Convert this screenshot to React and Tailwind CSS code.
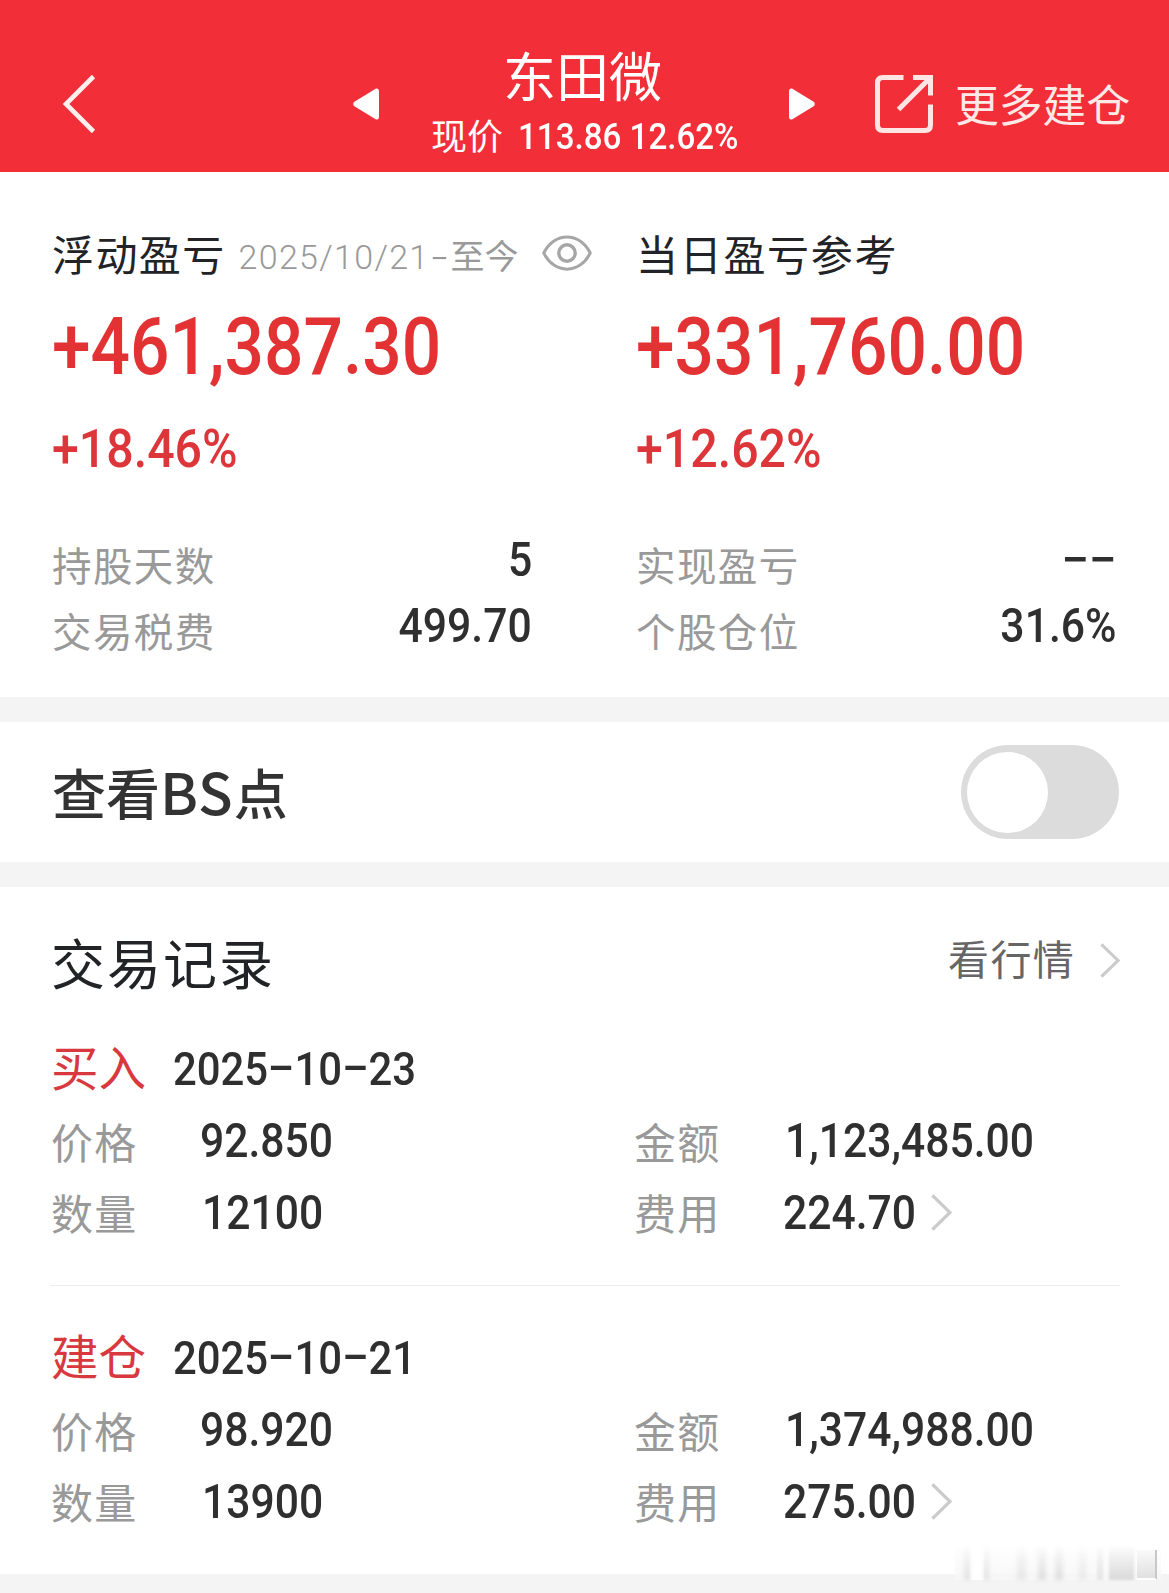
const CJK = 'font-["Noto_Sans_CJK_SC",sans-serif]';
const DIGITS = 'font-["Roboto",sans-serif] font-medium whitespace-nowrap inline-block';

function Chevron({ className }) {
  return (
    <svg viewBox="0 0 21 37" className={className} fill="none" stroke="#cbcbcb" strokeWidth="3.3">
      <path d="M1.4 1.4 L19 18.5 L1.4 35.6" />
    </svg>
  );
}

function Hyphen({ className, scale = "-translate-y-[3px] scale-x-[1.5]" }) {
  return (
    <span className={`inline-block text-center font-["Inter",sans-serif] ${className}`}>
      <span className={`inline-block ${scale}`}>-</span>
    </span>
  );
}

function DateText({ value }) {
  const parts = value.split("-");
  return (
    <span className={`${DIGITS} origin-left scale-x-[0.91] text-[46px] leading-none text-[#2f2f2f]`}>
      {parts[0]}
      <Hyphen className="w-[29px]" />
      {parts[1]}
      <Hyphen className="w-[29px]" />
      {parts[2]}
    </span>
  );
}

function Header() {
  return (
    <header className="grid h-[172px] grid-cols-[353px_462px_1fr] bg-[#f22f38] pt-[37px] text-white">
      <div className="flex items-center pb-px pl-[62px]">
        <svg viewBox="0 0 34 60" className="h-[60px] w-[34px]" fill="none" stroke="#fff0ee" strokeWidth="4.6">
          <path d="M31.5 2.5 L4 30 L31.5 57.5" />
        </svg>
      </div>
      <div className="flex items-center justify-between pb-px">
        <svg viewBox="0 0 26 32" className="h-8 w-[26px]" fill="#fff">
          <path d="M23 0.5 Q26 0 26 3 V29 Q26 32 23 31.5 L1 18 Q-0.5 16 1 14 Z" />
        </svg>
        <div className="mt-[6px] flex flex-col items-center gap-[5px] self-start">
          <div className="h-[63px] pr-[3px] text-[53px] leading-[63px]">东田微</div>
          <div className="flex h-[46px] w-[306px] items-center text-[36px] leading-[46px]">
            <span className="shrink-0 whitespace-nowrap">现价</span>
            <span className={`${DIGITS} ml-[15px] origin-left scale-x-[0.92] pt-[5px] leading-none`}>113.86 12.62%</span>
          </div>
        </div>
        <svg viewBox="0 0 26 32" className="h-8 w-[26px]" fill="#fff">
          <path d="M3 0.5 Q0 0 0 3 V29 Q0 32 3 31.5 L25 18 Q26.5 16 25 14 Z" />
        </svg>
      </div>
      <div className="flex items-center pb-px pl-[60px]">
        <svg viewBox="0 0 58 58" className="size-[58px] shrink-0" fill="none" stroke="#ffe6e4" strokeWidth="5">
          <path d="M28.5 2.5 H8 Q2.5 2.5 2.5 8 V50 Q2.5 55.5 8 55.5 H50 Q55.5 55.5 55.5 50 V29.5" />
          <path d="M38 2.5 H55.5 V20.5 M55 3 L23.5 34.5" />
        </svg>
        <span className="ml-[22px] text-[43.8px] leading-none whitespace-nowrap text-[#ffe9e7]">更多建仓</span>
      </div>
    </header>
  );
}

function Stat({ label, children }) {
  return (
    <div className="flex h-[66px] items-center justify-between">
      <span className="mt-[3px] text-[39.5px] leading-none tracking-[1.4px] text-[#999]">{label}</span>
      <span className={`${DIGITS} mb-[4px] origin-right scale-x-[0.89] text-[48px] leading-none text-[#2f2f2f]`}>{children}</span>
    </div>
  );
}

function Performance({ amount, percent }) {
  return (
    <>
      <div className="mt-[15px] h-[96px]">
        <span className={`${DIGITS} origin-left scale-x-[0.868] text-[80px] leading-[96px] text-[#e33234]`}>{amount}</span>
      </div>
      <div className="mt-[21px] h-[66px]">
        <span className={`${DIGITS} origin-left scale-x-[0.888] text-[54.4px] leading-[66px] text-[#dc363a]`}>{percent}</span>
      </div>
    </>
  );
}

function Summary() {
  return (
    <section className="grid h-[525px] grid-cols-[584px_1fr] content-start gap-y-[47px] px-[52px] pt-[50px]">
      <div className="w-[560px]">
        <div className="flex h-[62px] items-center">
          <span className="text-[42px] leading-none tracking-[1.4px] text-[#222327]">浮动盈亏</span>
          <span className="ml-[13px] flex items-baseline pt-[6px] text-[34px] leading-none whitespace-nowrap text-[#999]">
            <span className='font-["Roboto",sans-serif] font-light tracking-[1.3px]'>
              2025/10/21
              <Hyphen className="w-[21px] font-light" scale="scale-x-[1.3]" />
            </span>
            至今
          </span>
          <svg viewBox="0 0 50 36" className="ml-[23px] h-9 w-[50px] shrink-0" fill="none" stroke="#a6a6a6" strokeWidth="3">
            <path d="M1.8 18 C12 -3.5 38 -3.5 48.2 18 C38 39.5 12 39.5 1.8 18 Z" />
            <circle cx="25" cy="18" r="8.2" strokeWidth="3.4" />
          </svg>
        </div>
        <Performance amount="+461,387.30" percent="+18.46%" />
      </div>
      <div>
        <div className="flex h-[62px] items-center">
          <span className="text-[42px] leading-none tracking-[1.7px] text-[#222327]">当日盈亏参考</span>
        </div>
        <Performance amount="+331,760.00" percent="+12.62%" />
      </div>
      <div className="w-[480px]">
        <Stat label="持股天数">5</Stat>
        <Stat label="交易税费">499.70</Stat>
      </div>
      <div className="w-[481px]">
        <Stat label="实现盈亏">
          <Hyphen className="w-[31px]" />
          <Hyphen className="w-[31px]" />
        </Stat>
        <Stat label="个股仓位">31.6%</Stat>
      </div>
    </section>
  );
}

function Field({ label, value, valueClass, chevron }) {
  return (
    <div className="flex h-[71.6px] items-center">
      <span className="mb-[4px] w-[86px] shrink-0 text-[42px] leading-none tracking-[1.2px] whitespace-nowrap text-[#999]">{label}</span>
      <span className={`${DIGITS} mb-[3px] origin-left scale-x-[0.888] text-[48px] leading-none text-[#2f2f2f] ${valueClass}`}>{value}</span>
      {chevron && <Chevron className="mb-[4px] -ml-[2px] h-[37px] w-[21px] shrink-0" />}
    </div>
  );
}

function Trade({ kind, date, price, amount, quantity, fee }) {
  return (
    <article className="h-[289px]">
      <div className="flex h-[76px] items-center">
        <span className="mb-[6px] text-[47.5px] leading-none text-[#d9383e]">{kind}</span>
        <span className="mb-px ml-[27px]">
          <DateText value={date} />
        </span>
      </div>
      <div className="grid grid-cols-[583px_1fr]">
        <Field label="价格" value={price} valueClass="ml-[63px]" />
        <Field label="金额" value={amount} valueClass="ml-[65px]" />
        <Field label="数量" value={quantity} valueClass="ml-[65px]" />
        <Field label="费用" value={fee} valueClass="ml-[63px]" chevron />
      </div>
    </article>
  );
}

function Ghost() {
  return (
    <div className="absolute right-[8px] bottom-[13px] flex h-[35px] w-[206px] items-stretch bg-linear-to-b from-white/0 to-[#f7f7f7]">
      <i className="ml-[9px] w-[6px] bg-linear-to-b from-white/0 to-[#e0e0e0] blur-[2px]" />
      <i className="w-[14px] bg-white" />
      <i className="w-[5px] bg-linear-to-b from-white/0 to-[#e0e0e0] blur-[2px]" />
      <i className="ml-[28px] w-[9px] bg-linear-to-b from-white/0 to-[#e6e6e6] blur-[2px]" />
      <i className="ml-[12px] w-[8px] bg-linear-to-b from-white/0 to-[#dedede] blur-[2px]" />
      <i className="ml-[9px] w-[8px] bg-linear-to-b from-white/0 to-[#dedede] blur-[2px]" />
      <i className="ml-[16px] w-[7px] bg-linear-to-b from-white/0 to-[#e8e8e8] blur-[2px]" />
      <i className="ml-[11px] w-[6px] bg-linear-to-b from-white/0 to-[#e4e4e4] blur-[1px]" />
      <i className="ml-[6px] w-[25px] bg-linear-to-b from-white/20 to-[#dadada] blur-[1px]" />
      <i className="mt-[5px] ml-[3px] w-[20px] border-r-2 border-b-2 border-r-[#c8c8c8] border-b-white bg-linear-to-b from-[#fafafa] to-[#e0e0e0]" />
    </div>
  );
}

export default function App() {
  return (
    <div className={`${CJK} relative flex h-[1593px] w-[1169px] flex-col overflow-hidden bg-white`}>
      <Header />
      <Summary />
      <div className="h-[25px] bg-[#f4f4f4]" />
      <section className="flex h-[140px] items-center justify-between pr-[50px] pl-[52px]">
        <h2 className="pb-[3px] text-[54px] leading-none font-medium text-[#333]">
          查看<span className="text-[57px] leading-none tracking-[1px]">BS</span>点
        </h2>
        <div className="flex h-[94px] w-[158px] items-center rounded-full bg-[#dcdcdc] pl-[6px]">
          <span className="size-[81px] rounded-full bg-white" />
        </div>
      </section>
      <div className="h-[25px] bg-[#f4f4f4]" />
      <section className="h-[687px] pr-[49px] pl-[51px]">
        <div className="flex h-[144px] items-center justify-between">
          <h2 className="pt-[5px] text-[54px] leading-none tracking-[2px] text-[#222327]">交易记录</h2>
          <div className="flex items-center pb-[4px]">
            <span className="text-[41px] leading-none tracking-[1.3px] text-[#666]">看行情</span>
            <Chevron className="mt-[6px] ml-[25px] h-[35px] w-[20px]" />
          </div>
        </div>
        <Trade kind="买入" date="2025-10-23" price="92.850" amount="1,123,485.00" quantity="12100" fee="224.70" />
        <div className="-mt-[35px] mb-[34px] h-px bg-[#ebebeb]" />
        <Trade kind="建仓" date="2025-10-21" price="98.920" amount="1,374,988.00" quantity="13900" fee="275.00" />
      </section>
      <div className="h-[19px] bg-[#f4f4f4]" />
      <Ghost />
    </div>
  );
}
